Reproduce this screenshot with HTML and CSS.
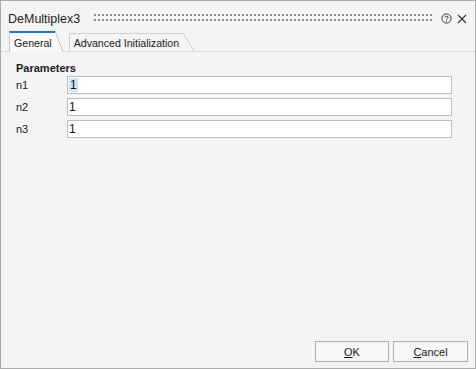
FILE: index.html
```html
<!DOCTYPE html>
<html lang="en">
<head>
    <meta charset="UTF-8">
    <title>DeMultiplex3</title>
    <link rel="stylesheet" href="styles.css">
</head>
<body>
    <div class="window">
        <div class="titlebar">
            <span class="title">DeMultiplex3</span>
            <span class="grip"></span>
            <span class="tb-btn help">
                <svg width="11" height="11" viewBox="0 0 11 11">
                    <circle cx="5.5" cy="5.5" r="4.6" fill="none" stroke="#333" stroke-width="1"/>
                    <path d="M3.9 4.4 C3.9 2.9 7.1 2.9 7.1 4.4 C7.1 5.5 5.5 5.5 5.5 6.6" fill="none" stroke="#333" stroke-width="1"/>
                    <rect x="5" y="7.4" width="1" height="1" fill="#333"/>
                </svg>
            </span>
            <span class="tb-btn close">
                <svg width="10" height="10" viewBox="0 0 10 10">
                    <path d="M1 1 L9 9 M9 1 L1 9" stroke="#333" stroke-width="1.1"/>
                </svg>
            </span>
        </div>

        <div class="tabs">
            <div class="tab active"><span class="tab-label">General</span></div>
            <div class="tab"><span class="tab-label">Advanced Initialization</span></div>
        </div>

        <div class="panel">
            <div class="section-title">Parameters</div>
            <div class="params">
                <label>n1</label>
                <div class="field"><span class="selected">1</span></div>
                <label>n2</label>
                <div class="field">1</div>
                <label>n3</label>
                <div class="field">1</div>
            </div>
        </div>

        <div class="footer">
            <button class="btn"><u>O</u>K</button>
            <button class="btn"><u>C</u>ancel</button>
        </div>
    </div>
</body>
</html>
```

FILE: styles.css
```css
* {
    margin: 0;
    padding: 0;
    box-sizing: border-box;
    font-family: "Liberation Sans", Arial, sans-serif;
}

body {
    width: 476px;
    height: 369px;
    background: #f4f4f4;
    color: #1a1a1a;
    font-size: 11px;
}

.window {
    width: 476px;
    height: 369px;
    border: 1px solid #ababab;
    background: #f4f4f4;
    display: flex;
    flex-direction: column;
}

/* title bar */
.titlebar {
    height: 30px;
    display: flex;
    align-items: center;
    padding: 0 8px 0 7px;
}

.title {
    font-size: 12.5px;
    color: #222;
    padding-top: 5px;
}

.grip {
    flex: 1;
    height: 10px;
    margin: 3px 7px 0 14px;
    background-image: linear-gradient(to right, transparent 2px, #f4f4f4 2px),
                      linear-gradient(to bottom, #8c8c8c 2px, #f4f4f4 2px);
    background-size: 4px 5px;
    background-position: 0 1px;
}

.tb-btn {
    display: flex;
    margin-top: 5px;
}

.close {
    margin-left: 5px;
}

/* tabs */
.tabs {
    height: 21px;
    display: flex;
    align-items: flex-end;
    padding-left: 8px;
    border-bottom: 1px solid #dadada;
}

.tab {
    display: flex;
    align-self: stretch;
    margin-bottom: -1px;
    font-size: 10.6px;
}

.tab::after {
    content: "";
    width: 8px;
    background: linear-gradient(to top right, #f9f9f9 calc(50% - 0.7px), #c9c9c9 calc(50% - 0.3px), #c9c9c9 calc(50% + 0.3px), transparent calc(50% + 0.7px));
}

.tab-label {
    display: flex;
    align-items: center;
    padding: 0 3px 0 4px;
    background: #f9f9f9;
    border-left: 1px solid #c9c9c9;
    border-top: 2px solid #1f7cb0;
    color: #1a1a1a;
}

.tab + .tab {
    margin-left: 6px;
    margin-top: 2px;
    margin-bottom: 0;
}

.tab + .tab .tab-label {
    background: #f4f4f4;
    border-top: 1px solid #d0d0d0;
    border-left-color: #d0d0d0;
    padding-right: 4px;
}

.tab + .tab::after {
    width: 11px;
    background: linear-gradient(to top right, #f4f4f4 calc(50% - 0.7px), #d0d0d0 calc(50% - 0.3px), #d0d0d0 calc(50% + 0.3px), transparent calc(50% + 0.7px));
}

/* parameters panel */
.panel {
    padding: 9px 0 0 15px;
}

.section-title {
    font-weight: bold;
    font-size: 11px;
    height: 15px;
    line-height: 15px;
}

.params {
    display: grid;
    grid-template-columns: 51px 385px;
    grid-auto-rows: 18px;
    row-gap: 4px;
    align-items: center;
}

.params label {
    color: #222;
}

.field {
    height: 18px;
    border: 1px solid #bdbdbd;
    background: #fff;
    padding-left: 1px;
    line-height: 16px;
    font-size: 12px;
    color: #111;
}

.selected {
    background: #cce4f7;
    padding: 0 1px;
}

/* buttons */
.footer {
    margin-top: auto;
    display: flex;
    justify-content: flex-end;
    gap: 4px;
    padding: 0 7px 6px 0;
}

.btn {
    width: 74px;
    height: 21px;
    background: #f7f7f7;
    border: 1px solid #adadad;
    font-size: 11px;
    color: #1a1a1a;
}

.btn + .btn {
    width: 75px;
}
```
